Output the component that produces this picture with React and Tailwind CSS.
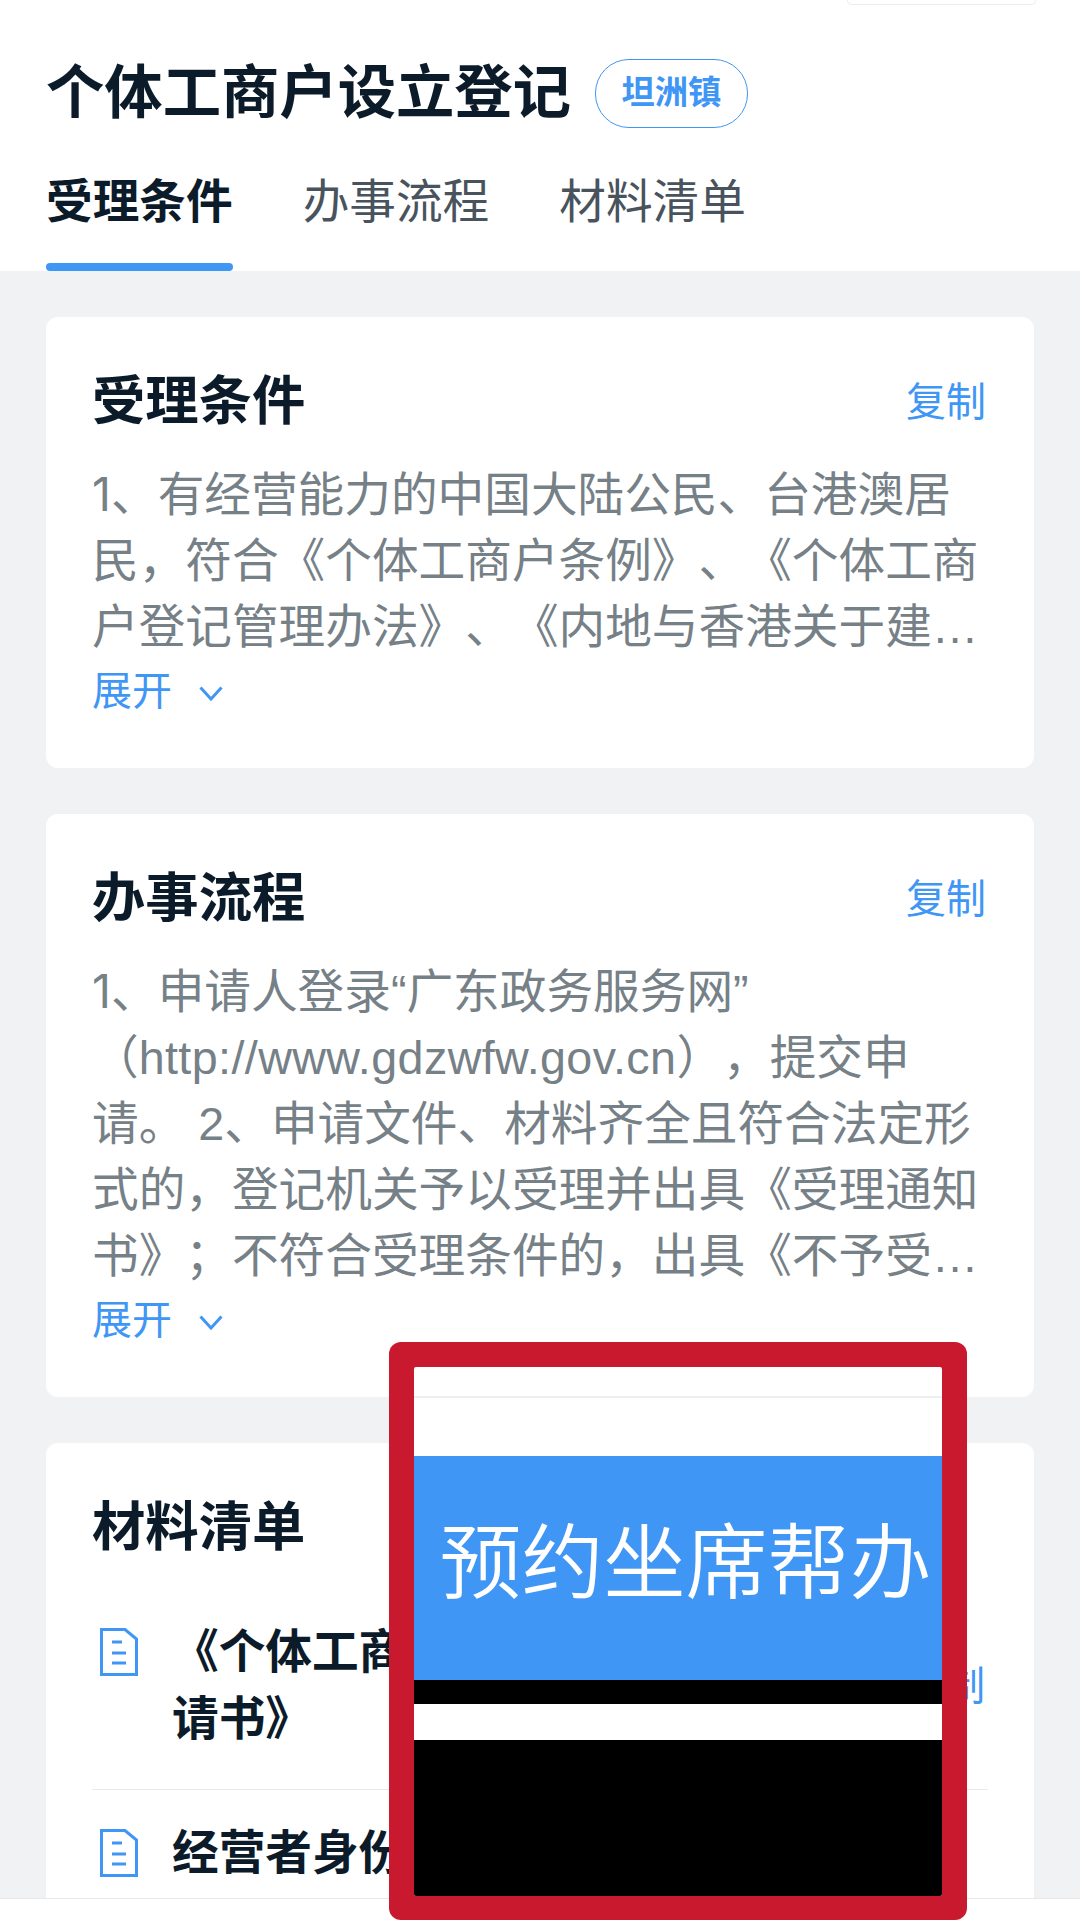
const fontStack = { fontFamily: '"Liberation Sans", "Noto Sans CJK SC", sans-serif' };

const DocIcon = () => (
  <svg width="38" height="48" viewBox="0 0 38 48" fill="none" stroke="#4096f5" strokeWidth="3" className="shrink-0">
    <path d="M1.5 1.5H25L36.5 11V46.5H1.5Z" />
    <path d="M12 14H22M12 25H26M12 35H26" />
  </svg>
);

const Chevron = () => (
  <svg width="24" height="15" viewBox="0 0 24 15" fill="none" stroke="#4096f5" strokeWidth="3" className="ml-[27px] mt-[6px]">
    <path d="M1.5 1.5L12 13L22.5 1.5" />
  </svg>
);

const TextCard = ({ title, clamp, children }) => (
  <section className="rounded-[12px] bg-white pt-[45px] pr-[48px] pb-[47px] pl-[46px]">
    <div className="flex items-center justify-between">
      <h3 className="text-[53.33px] leading-[80px] font-semibold text-[#0c1b29]">{title}</h3>
      <span className="text-[40px] leading-[60px] text-[#4096f5]">复制</span>
    </div>
    <p className={`mt-[20px] text-[46.67px] leading-[66px] text-[#768087] ${clamp}`}>{children}</p>
    <div className="flex h-[61px] items-center">
      <span className="text-[40px] leading-[60px] text-[#4096f5]">展开</span>
      <Chevron />
    </div>
  </section>
);

const FileRow = ({ name, copy, className }) => (
  <div className={`flex items-center ${className}`}>
    <div className="flex flex-1 gap-[34px] pl-[8px]">
      <div className="pt-[9px]">
        <DocIcon />
      </div>
      <div className="w-[530px] text-[46.67px] leading-[66.67px] font-semibold text-[#0c1b29]">{name}</div>
    </div>
    {copy && <span className="mr-[3px] ml-auto shrink-0 text-[40px] leading-[60px] text-[#4096f5]">复制</span>}
  </div>
);

export default function App() {
  return (
    <div className="relative flex h-[1920px] w-[1080px] flex-col overflow-hidden bg-[#f1f2f4] [text-spacing-trim:space-all]" style={fontStack}>
      <header className="bg-white">
        <div className="ml-auto mr-[44px] h-[5px] w-[189px] rounded-b-[20px] border border-t-0 border-[#ececec]" />
        <div className="flex items-center gap-[24px] px-[46px] pt-[48px]">
          <h1 className="text-[58.33px] leading-[80px] font-semibold text-[#0c1b29]">个体工商户设立登记</h1>
          <span className="flex h-[69px] w-[153px] items-center justify-center rounded-[34px] border border-[#4096f5] text-[33.33px] font-semibold text-[#4096f5]">
            坦洲镇
          </span>
        </div>
        <nav className="mt-[36px] flex gap-[70px] px-[46px] text-[46.67px] leading-[66.67px]">
          <div className="flex h-[102px] flex-col justify-between font-semibold text-[#0c1b29]">
            受理条件
            <div className="h-[8px] rounded-[4px] bg-[#4096f5]" />
          </div>
          <div className="text-[#48535d]">办事流程</div>
          <div className="text-[#48535d]">材料清单</div>
        </nav>
      </header>

      <main className="flex flex-1 flex-col gap-[46px] overflow-hidden px-[46px] pt-[46px]">
        <TextCard title="受理条件" clamp="line-clamp-3">
          <span className="font-['Inter'] leading-none">1</span>、有经营能力的中国大陆公民、台港澳居民，符合《个体工商户条例》、《个体工商户登记管理办法》、《内地与香港关于建立更紧密经贸关系的安排》等规定的人员。
        </TextCard>
        <TextCard title="办事流程" clamp="line-clamp-5">
          <span className="font-['Inter'] leading-none">1</span>、申请人登录“广东政务服务网”
          <br />
          （<span className="tracking-[0.4px]">http://www.gdzwfw.gov.cn</span>），提交申请。 2、申请文件、材料齐全且符合法定形式的，登记机关予以受理并出具《受理通知书》；不符合受理条件的，出具《不予受理通知书》并说明理由。
        </TextCard>
        <section className="flex-1 rounded-t-[12px] bg-white px-[46px] pt-[45px]">
          <h3 className="text-[53.33px] leading-[80px] font-semibold text-[#0c1b29]">材料清单</h3>
          <FileRow className="mt-[51px] border-b border-[#e8e9eb] pb-[37px]" name="《个体工商户设立登记申请书》" copy />
          <FileRow className="mt-[30px]" name="经营者身份证明" />
        </section>
      </main>

      <footer className="h-[22px] border-t border-[#e8e9eb] bg-white" />

      {/* red frame lying over the page */}
      <div className="absolute top-[1342px] left-[389px] h-[578px] w-[578px] rounded-[12px] bg-[#c8192f] p-[25px]">
        <div className="flex h-[529px] flex-col overflow-hidden rounded-[2px] bg-white">
          <div className="mt-[29px] h-[2px] bg-[#eeeff1]" />
          <div className="mt-[58px] flex h-[224px] items-center justify-center bg-[#4096f5] pb-[8px] pl-[15px] text-[82px] leading-none font-[350] whitespace-nowrap text-white">
            预约坐席帮办
          </div>
          <div className="h-[24px] bg-black" />
          <div className="h-[36px] bg-white" />
          <div className="flex-1 bg-black" />
        </div>
      </div>
    </div>
  );
}
